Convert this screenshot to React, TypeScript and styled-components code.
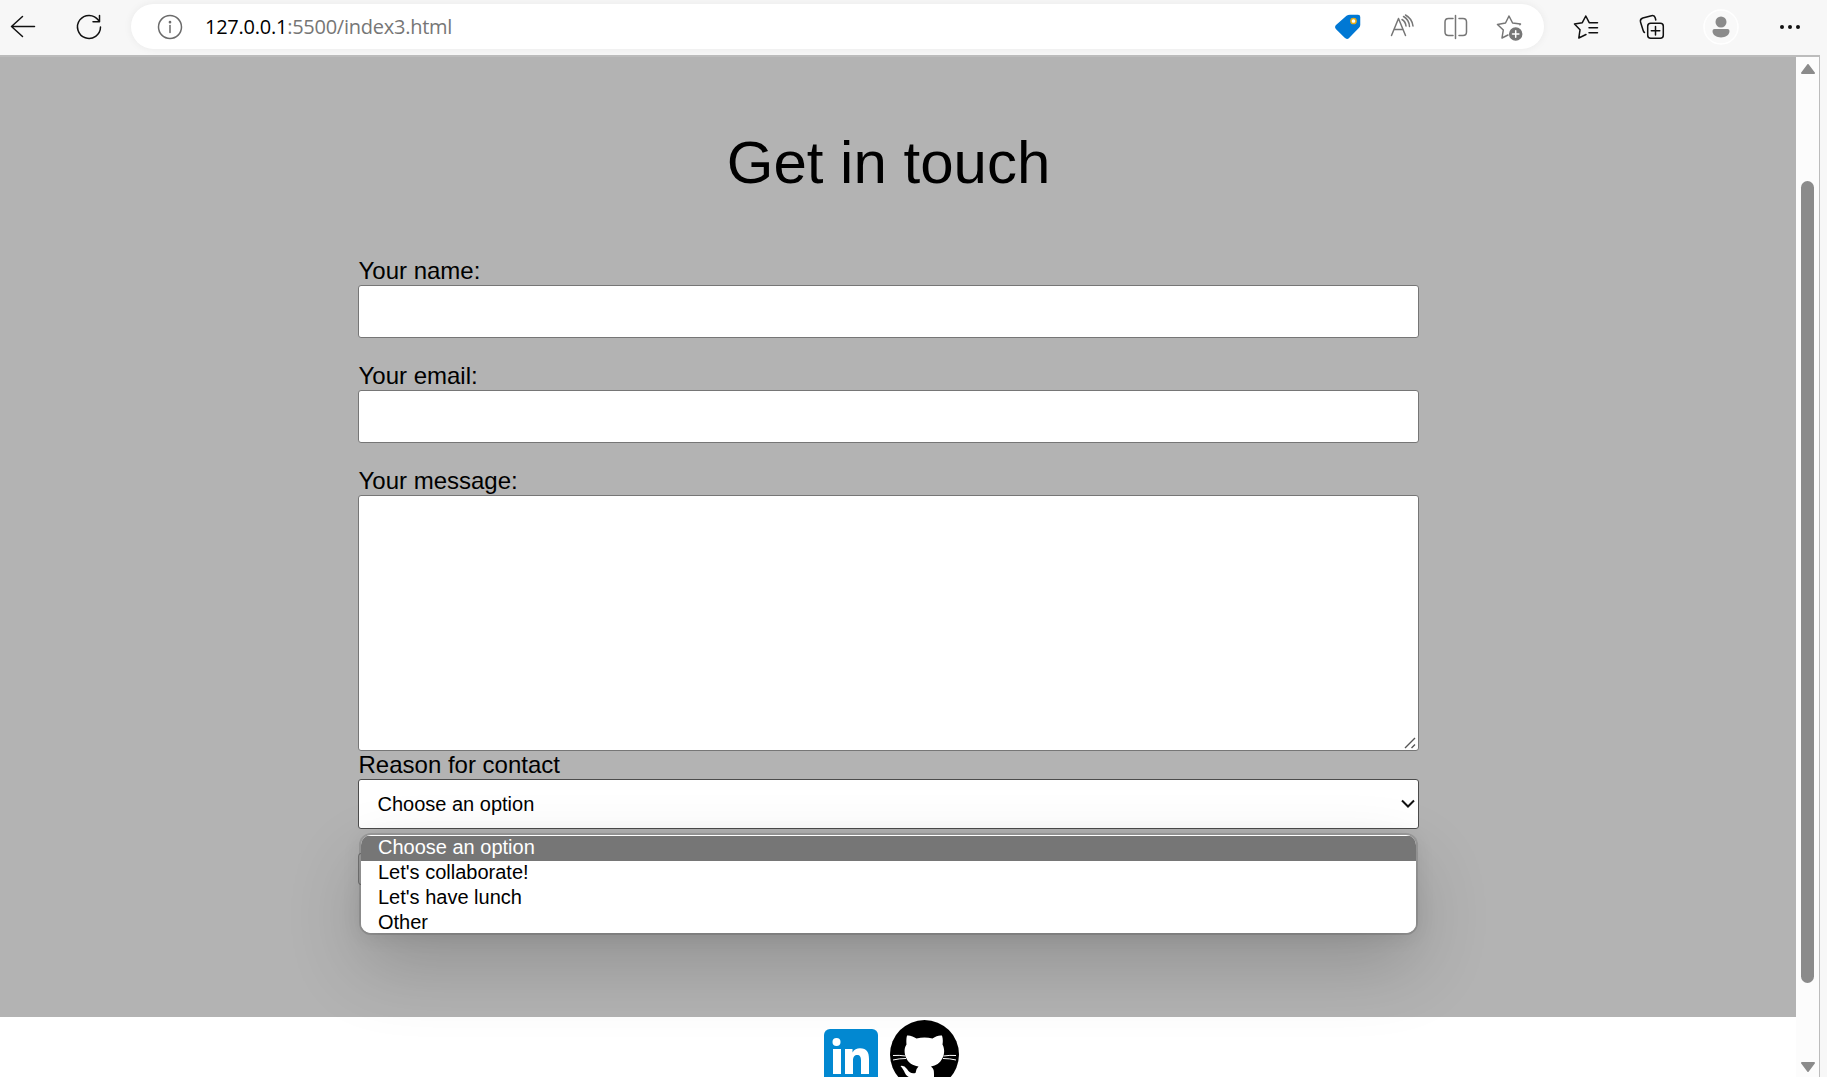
import React from "react";
import styled, { createGlobalStyle } from "styled-components";

const Global = createGlobalStyle`
  *, *::before, *::after { box-sizing: border-box; }
  html, body { margin: 0; height: 100%; overflow: hidden; }
  body { background: #f7f7f7; font-family: "Liberation Sans", Arial, sans-serif; color: #000; }
`;

const Browser = styled.div`
  display: flex;
  flex-direction: column;
  width: 1827px;
  height: 1077px;
  overflow: hidden;
  background: #f7f7f7;
`;

const Toolbar = styled.header`
  display: flex;
  align-items: center;
  flex: none;
  height: 55px;
  padding: 0 18px 2px 8px;
`;

const AddressBar = styled.div`
  display: flex;
  align-items: center;
  width: 1413px;
  height: 45px;
  margin-left: 27px;
  padding: 0 19px 0 24px;
  border-radius: 23px;
  background: #fff;
  box-shadow: 0 0 8px rgba(0, 0, 0, 0.06);
`;

const Url = styled.div`
  flex: 1;
  margin-left: 20px;
  font: 20px/27px "Open Sans", sans-serif;
  letter-spacing: -0.25px;
  color: #767676;
`;

const Host = styled.span`
  color: #000;
`;

const Glyph = styled.svg<{ $gap?: number; $color?: string }>`
  display: block;
  flex: none;
  margin-left: ${(p) => p.$gap ?? 0}px;
  color: ${(p) => p.$color ?? "#111"};
  fill: none;
  stroke: currentColor;
  stroke-width: 1.5;
  stroke-linecap: round;
  stroke-linejoin: round;
`;

const Viewport = styled.div`
  display: flex;
  flex: 1;
  min-height: 0;
  width: 1820px;
  border-top: 2px solid #bcbcbc;
  border-right: 1px solid #bcbcbc;
`;

const Page = styled.main`
  display: flex;
  flex-direction: column;
  flex: 1;
  overflow: hidden;
  background: #fff;
`;

const Contact = styled.section`
  flex: none;
  height: 960px;
  padding: 72px 377px 0 358px;
  background: #b3b3b3;
`;

const Title = styled.h1`
  margin: 0 0 60px;
  font-size: 60px;
  line-height: 68px;
  font-weight: 400;
  text-align: center;
`;

const Form = styled.div`
  display: flex;
  flex-direction: column;
`;

const Label = styled.label`
  height: 28px;
  padding-left: 0.5px;
  font-size: 24px;
  line-height: 27px;
`;

const Field = styled.input`
  height: 53px;
  margin: 0 0 24px;
  border: 1px solid #767676;
  border-radius: 3px;
  background: #fff;
`;

const MessageBox = styled.div`
  display: flex;
  align-items: flex-end;
  justify-content: flex-end;
  height: 256px;
  border: 1px solid #767676;
  border-radius: 3px;
  background: #fff;
`;

const SelectWrap = styled.div`
  position: relative;
`;

const SelectBox = styled.div`
  display: flex;
  align-items: center;
  justify-content: space-between;
  height: 50px;
  padding: 0 3px 0 18.5px;
  border: 1px solid #4c4c4c;
  border-radius: 3px;
  background: #fff;
  font-size: 20px;
`;

const Menu = styled.ul`
  position: absolute;
  left: 3px;
  right: 3px;
  top: 56px;
  margin: 0;
  padding: 1px 0 0;
  height: 98px;
  overflow: hidden;
  list-style: none;
  border-radius: 10px;
  background: #fff;
`;

const MenuShadow = styled.div`
  position: absolute;
  left: 3px;
  right: 3px;
  top: 56px;
  height: 98px;
  border-radius: 10px;
  box-shadow: 0 0 0 2px rgba(0, 0, 0, 0.12), 0 32px 75px rgba(0, 0, 0, 0.19), 0 3px 20px rgba(0, 0, 0, 0.09);
`;

const Option = styled.li<{ $active?: boolean }>`
  height: 25px;
  padding-left: 17px;
  font-size: 20px;
  line-height: 23px;
  color: ${(p) => (p.$active ? "#fff" : "#000")};
  background: ${(p) => (p.$active ? "#767676" : "#fff")};
`;

const Submit = styled.button`
  width: 90px;
  height: 32px;
  margin-top: 24px;
  border: 1px solid #767676;
  border-radius: 3px;
  background: #b3b3b3;
`;

const Footer = styled.footer`
  display: flex;
  align-items: flex-start;
  flex: none;
  height: 90px;
  padding: 3px 0 0 824px;
`;

const Logo = styled.svg<{ $top?: number; $gap?: number }>`
  position: relative;
  z-index: 1;
  display: block;
  flex: none;
  margin: ${(p) => p.$top ?? 0}px 0 0 ${(p) => p.$gap ?? 0}px;
`;

const Scrollbar = styled.div`
  display: flex;
  flex-direction: column;
  align-items: center;
  width: 23px;
  padding-top: 7px;
  background: #fcfcfc;
`;

const Thumb = styled.div`
  width: 13px;
  height: 802px;
  margin: 107px 0 79px;
  border-radius: 7px;
  background: #8b8b8b;
`;

const Arrow = styled.svg`
  display: block;
  flex: none;
  fill: #8b8b8b;
  stroke: #8b8b8b;
  stroke-width: 2;
  stroke-linejoin: round;
`;

export default function App() {
  return (
    <>
      <Global />
      <Browser>
        <Toolbar>
          <Glyph width="30" height="30" viewBox="0 0 30 30">
            <path d="M26.5 14.5H3.5M14.5 4.5L3.5 14.5L14.5 24.5" />
          </Glyph>
          <Glyph $gap={36} width="30" height="30" viewBox="0 0 30 30">
            <path d="M26.5 15A11.5 11.5 0 1 1 24.5 8.4M25.5 3.5V9.8H19" />
          </Glyph>
          <AddressBar>
            <Glyph $color="#6b6b6b" width="30" height="30" viewBox="0 0 30 30">
              <circle cx="15" cy="15" r="11.5" />
              <path d="M15 13.5V20.5" />
              <circle cx="15" cy="10.2" r=".6" />
            </Glyph>
            <Url>
              <Host>127.0.0.1</Host>:5500/index3.html
            </Url>
            <Glyph $color="#0078d4" width="30" height="30" viewBox="0 0 30 30">
              <path d="M17 3.5H25Q26.5 3.5 26.5 5V13Q26.5 14.2 25.5 15.2L15.8 25.2Q14 27 12.2 25.2L3.6 16.8Q2 15 3.8 13.4L14 4.4Q15.2 3.5 17 3.5Z" fill="currentColor" />
              <circle cx="20.5" cy="9" r="2.6" stroke="#e5ad16" fill="#fff" strokeWidth="1.5" />
            </Glyph>
            <Glyph $gap={25} $color="#767676" width="30" height="30" viewBox="0 0 30 30">
              <path d="M3.5 23.5L10.5 6.5L17.5 23.5M6 17.5H15M14 7.5Q17.5 9.5 18 14M15.5 4.5Q21 7.5 21.5 14.5M17.5 3Q24 6.5 25 14" />
            </Glyph>
            <Glyph $gap={23} $color="#767676" width="30" height="30" viewBox="0 0 30 30">
              <path d="M12 6.5H7.5Q4 6.5 4 10V20Q4 23.5 7.5 23.5H12M18 6.5H22Q25.5 6.5 25.5 10V20Q25.5 23.5 22 23.5H18M14.5 3.5V26.5" />
            </Glyph>
            <Glyph $gap={24} $color="#767676" width="30" height="30" viewBox="0 0 30 30">
              <path d="M24.8 12.8L25.5 12L17.6 11L14 4L10.5 11L2.5 12.5L8.3 18L7 26L13 23" />
              <circle cx="20.7" cy="22" r="6" fill="currentColor" />
              <path d="M20.7 18.8V25.2M17.5 22H23.9" stroke="#fff" />
            </Glyph>
          </AddressBar>
          <Glyph $gap={27} width="30" height="30" viewBox="0 0 30 30">
            <path d="M26.5 10.7H18.2L14.8 4L11.3 10.7L3.5 12L9 17.8L7.8 26L15 22.5M18 15.7H26.5M18 20.7H26.5" />
          </Glyph>
          <Glyph $gap={37} width="30" height="30" viewBox="0 0 30 30">
            <rect x="9.7" y="11.3" width="15.6" height="15" rx="3" />
            <path d="M17.5 14.5V23M13.3 18.8H21.8M6.5 20.5Q5.5 20 5 18L2.5 10Q1.8 7 4.8 6L13.5 3.7Q16.5 3 17.2 5.8L17.8 8" />
          </Glyph>
          <Glyph $gap={35} width="36" height="36" viewBox="0 0 36 36">
            <circle cx="18" cy="18" r="17" fill="#f9f9f9" stroke="#fff" />
            <circle cx="18" cy="13" r="5.5" fill="#8b8b8b" stroke="none" />
            <path d="M11.5 20H24.5Q26.5 20 26.5 22C26.5 30.5 9.5 30.5 9.5 22Q9.5 20 11.5 20Z" fill="#8b8b8b" stroke="none" />
          </Glyph>
          <Glyph $gap={37} width="30" height="30" viewBox="0 0 30 30">
            <g fill="#111" stroke="none">
              <circle cx="6" cy="15" r="2" />
              <circle cx="14" cy="15" r="2" />
              <circle cx="22" cy="15" r="2" />
            </g>
          </Glyph>
        </Toolbar>
        <Viewport>
          <Page>
            <Contact>
              <Title>Get in touch</Title>
              <Form>
                <Label htmlFor="name">Your name:</Label>
                <Field id="name" />
                <Label htmlFor="email">Your email:</Label>
                <Field id="email" />
                <Label>Your message:</Label>
                <MessageBox>
                  <svg width="14" height="14" viewBox="0 0 14 14" stroke="#555" strokeWidth="1.4">
                    <path d="M1 12L11 2M7.5 12L11 8.5" />
                  </svg>
                </MessageBox>
                <Label>Reason for contact</Label>
                <SelectWrap>
                  <SelectBox>
                    <span>Choose an option</span>
                    <svg width="14" height="10" viewBox="0 0 14 10" fill="none" stroke="#111" strokeWidth="2">
                      <path d="M1 1.5L7 7.5L13 1.5" />
                    </svg>
                  </SelectBox>
                  <MenuShadow />
                  <Menu>
                    <Option $active>Choose an option</Option>
                    <Option>Let's collaborate!</Option>
                    <Option>Let's have lunch</Option>
                    <Option>Other</Option>
                  </Menu>
                </SelectWrap>
                <Submit />
              </Form>
            </Contact>
            <Footer>
              <Logo $top={9} width="54" height="54" viewBox="0 0 54 54">
                <rect width="54" height="54" rx="6" fill="#0288d1" />
                <g fill="#fff">
                  <circle cx="12.5" cy="13" r="4" />
                  <path d="M9 20H17V45H9ZM21 20H28.5V23.5C30 20.5 33 19.3 36 19.3C43 19.3 45 23.5 45 30V45H37V31.5C37 28 36 26 33 26C30 26 29 28.5 29 31.5V45H21Z" />
                </g>
              </Logo>
              <Logo $gap={12} width="69" height="69" viewBox="0 0 69 69">
                <circle cx="34.5" cy="34.5" r="34.5" fill="#000" />
                <path d="M17 15.5C20 15 24 17 26.5 18.5Q34.5 16.5 42.5 18.5C46 16 49 15 52 15.5C53 18.5 53 21.5 52.5 24.5C55 29 54.5 35 52 39C50 43 46 45.5 41 46.5C44 49 44 51 44 54V68H25V58C19 58.5 16 56 14 51Q12 47.5 10.5 46Q14 45 17 49C19.5 53 22 54 25.5 53Q26 48.5 28.5 46.5C22 45.5 18 42 16.2 38C14 33 14 28 16.5 24.5Q16 19 17 15.5Z" fill="#fff" />
                <path d="M3 35.5Q9 35 15.5 36M3 40Q9 38.5 16 38.5M53.5 36Q60 35 66 35.5M53 38.5Q60 38.5 66 40" fill="none" stroke="#fff" strokeWidth="1" />
              </Logo>
            </Footer>
          </Page>
          <Scrollbar>
            <Arrow width="16" height="10" viewBox="0 0 16 10">
              <path d="M8 1L14 9H2Z" />
            </Arrow>
            <Thumb />
            <Arrow width="16" height="10" viewBox="0 0 16 10">
              <path d="M2 1H14L8 9Z" />
            </Arrow>
          </Scrollbar>
        </Viewport>
      </Browser>
    </>
  );
}
